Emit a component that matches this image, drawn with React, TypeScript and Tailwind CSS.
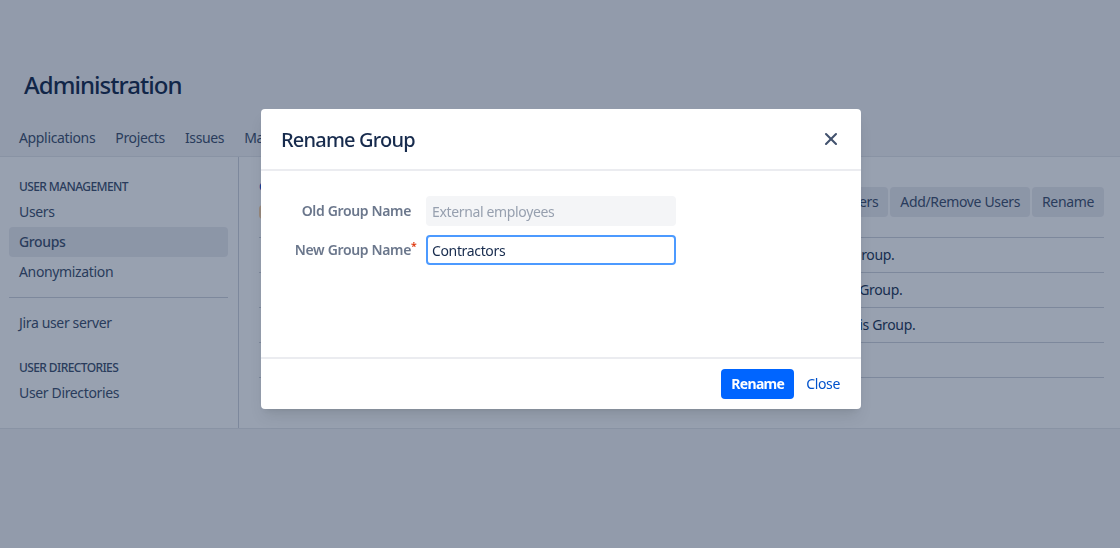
import React from "react";
import { X } from "lucide-react";

const tabs = ["Applications", "Projects", "Issues", "Manage apps", "User management"];

const rows = [
  "Can view the members of this Group.",
  "Can select the members of this Group.",
  "Can rename the members of this Group.",
  "Can delete",
];

const SideItem = ({ label, active }: { label: string; active?: boolean }) => (
  <a
    href="#"
    className={`flex h-7.5 items-center rounded px-2.5 text-sm tracking-tight text-[#42526e] ${
      active ? "bg-[#ebecf0] font-medium" : ""
    }`}>
    {label}
  </a>
);

const App: React.FC = () => {
  return (
    <div className="relative h-screen overflow-hidden bg-[#f4f5f7] font-['Noto_Sans',sans-serif]">
      <header className="h-[157px] border-b border-gray-200 px-4.75 pt-17.25">
        <h1 className="px-1.25 text-2xl font-medium tracking-[-0.04em] text-[#172b4d]">Administration</h1>
        <nav className="mt-6.75 flex gap-5 text-sm tracking-tight text-[#42526e]">
          {tabs.map((tab) => (
            <a key={tab} href="#">
              {tab}
            </a>
          ))}
        </nav>
      </header>

      <div className="flex h-68 border-b border-gray-200 bg-white">
        <aside className="w-[239px] border-r border-gray-300 pl-2.25 pr-2.5 pt-5.5">
          <h3 className="px-2.5 text-xs font-medium tracking-tighter text-[#42526e]">USER MANAGEMENT</h3>
          <div className="mt-0.5">
            <SideItem label="Users" />
            <SideItem label="Groups" active />
            <SideItem label="Anonymization" />
          </div>
          <hr className="my-2.5 border-gray-300" />
          <SideItem label="Jira user server" />
          <h3 className="mt-5.5 px-2.5 text-xs font-medium tracking-tighter text-[#42526e]">USER DIRECTORIES</h3>
          <div className="mt-0.5">
            <SideItem label="User Directories" />
          </div>
        </aside>

        <main className="flex-1 pl-5 pr-4 pt-5.5">
          <div className="flex items-start justify-between">
            <div>
              <a href="#" className="block text-xs font-medium text-[#0052cc]">
                Groups
              </a>
              <div className="mt-2.5 size-3.5 rounded-sm bg-orange-200" />
            </div>
            <div className="mt-2 flex gap-0.5 text-sm tracking-tight text-[#42526e]">
              <button className="h-7.5 rounded bg-[#ebecf0] px-2.5">Bulk Edit Users</button>
              <button className="h-7.5 rounded bg-[#ebecf0] px-2.5">Add/Remove Users</button>
              <button className="h-7.5 rounded bg-[#ebecf0] px-2.5">Rename</button>
            </div>
          </div>
          <div className="mt-4.5 border-t border-gray-300">
            {rows.map((row) => (
              <div key={row} className="flex h-8.75 items-center border-b border-gray-300 pl-101 text-sm tracking-tight text-[#253858]">
                {row}
              </div>
            ))}
          </div>
        </main>
      </div>

      <div className="fixed inset-0 flex items-start justify-center bg-[#091e42]/42 pl-0.5 pt-[109px]">
        <div className="flex h-75 w-[600px] flex-col rounded bg-white shadow-lg">
          <div className="flex h-15.5 items-center justify-between border-b-2 border-[#ebecf0] px-5">
            <h2 className="pt-0.5 text-xl font-medium tracking-[-0.04em] text-[#172b4d]">Rename Group</h2>
            <X className="size-5 text-[#42526e]" strokeWidth={2.5} />
          </div>
          <div className="flex-1 pl-1.5 pt-6.25">
            <div className="grid grid-cols-[144px_250px] items-center gap-x-3.75 gap-y-2.25">
              <label className="text-right text-sm font-semibold tracking-tight text-[#6b778c]">Old Group Name</label>
              <input
                readOnly
                value="External employees"
                className="h-7.5 rounded bg-[#f4f5f7] px-1.5 text-sm tracking-tight text-[#97a0af] outline-none"
              />
              <label className="relative text-right text-sm font-semibold tracking-tight text-[#6b778c]">
                New Group Name
                <sup className="absolute left-full top-1.5 text-[#de350b]">*</sup>
              </label>
              <input
                readOnly
                value="Contractors"
                className="h-7.5 rounded border-2 border-[#4c9aff] px-1 text-sm tracking-tight text-[#172b4d] outline-none"
              />
            </div>
          </div>
          <div className="flex h-13 items-center justify-end gap-3 border-t-2 border-[#ebecf0] pl-5 pr-5.25">
            <button className="h-7.5 rounded bg-[#0065ff] px-2.5 text-sm font-bold tracking-tighter text-white">Rename</button>
            <a href="#" className="text-sm tracking-tight text-[#0052cc]">
              Close
            </a>
          </div>
        </div>
      </div>
    </div>
  );
};

export default App;
